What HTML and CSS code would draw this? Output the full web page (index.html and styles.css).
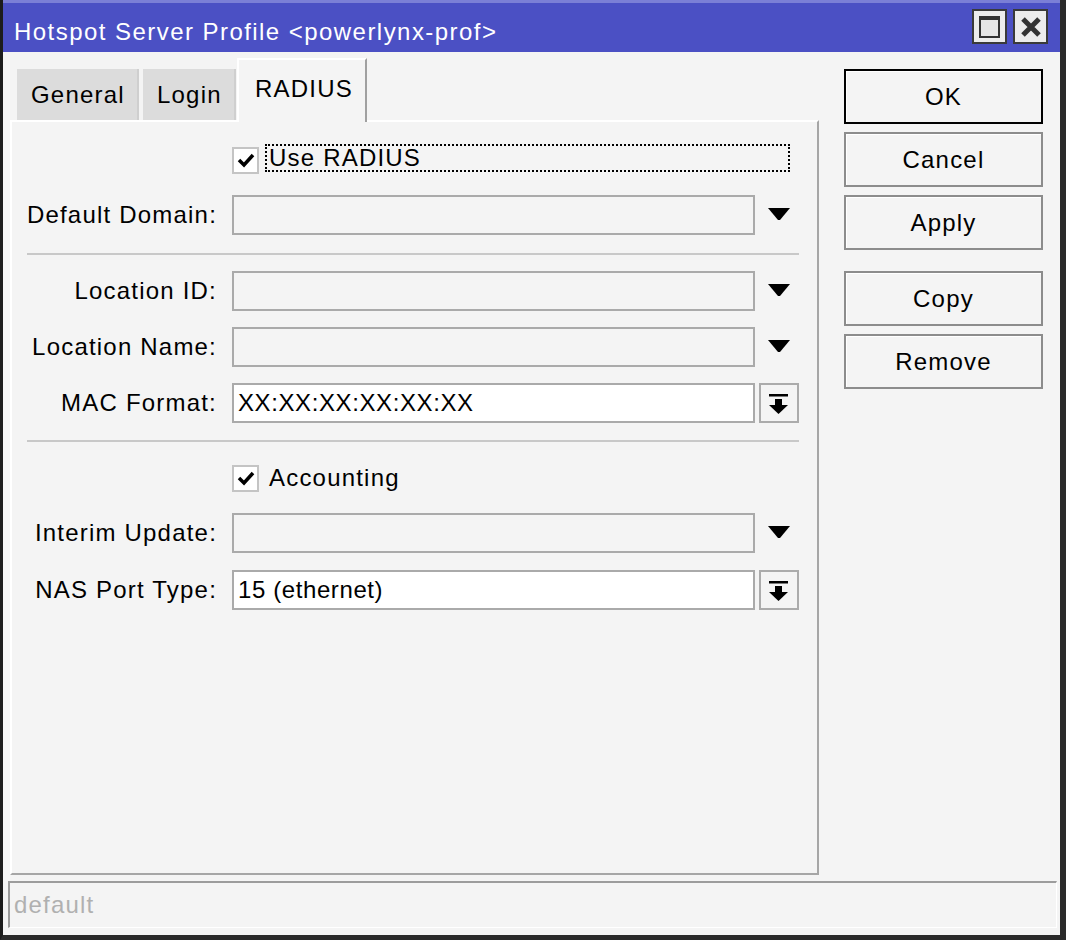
FILE: index.html
```html
<!DOCTYPE html>
<html>
<head>
<meta charset="utf-8">
<link rel="stylesheet" href="styles.css">
</head>
<body>
<div class="window">
  <div class="titlebar">
    <span class="title">Hotspot Server Profile &lt;powerlynx-prof&gt;</span>
    <div class="winbtns">
      <div class="winbtn"><span class="maxicon"></span></div>
      <div class="winbtn">
        <svg width="22" height="22" viewBox="0 0 22 22"><path d="M3 3 L19 19 M19 3 L3 19" stroke="#333" stroke-width="5"/></svg>
      </div>
    </div>
  </div>
  <div class="main">
    <div class="leftcol">
      <div class="tabs">
        <div class="tab t-general">General</div>
        <div class="tab t-login">Login</div>
        <div class="tab active">RADIUS</div>
      </div>
      <div class="panel">
        <div class="row check-row first">
          <span class="spacer"></span>
          <span class="checkbox"><svg width="18" height="16" viewBox="0 0 18 16"><path d="M2 8 L7 13 L16 3" fill="none" stroke="#000" stroke-width="3.5"/></svg></span>
          <span class="check-label focus">Use RADIUS</span>
        </div>
        <div class="row r-dd">
          <label class="lbl">Default Domain:</label>
          <div class="field"></div>
          <div class="arrow"><svg width="22" height="12" viewBox="0 0 22 12"><polygon points="0,0 22,0 12,12 10,12" fill="#000"/></svg></div>
        </div>
        <div class="sep s1"></div>
        <div class="row r-loc">
          <label class="lbl">Location ID:</label>
          <div class="field"></div>
          <div class="arrow"><svg width="22" height="12" viewBox="0 0 22 12"><polygon points="0,0 22,0 12,12 10,12" fill="#000"/></svg></div>
        </div>
        <div class="row r-next">
          <label class="lbl">Location Name:</label>
          <div class="field"></div>
          <div class="arrow"><svg width="22" height="12" viewBox="0 0 22 12"><polygon points="0,0 22,0 12,12 10,12" fill="#000"/></svg></div>
        </div>
        <div class="row r-next">
          <label class="lbl">MAC Format:</label>
          <div class="field white">XX:XX:XX:XX:XX:XX</div>
          <div class="dbtn"><svg width="36" height="36" viewBox="0 0 36 36"><rect x="8" y="9" width="19" height="2.5" fill="#000"/><rect x="14" y="14" width="7" height="7" fill="#000"/><polygon points="8,20 27,20 17.5,29" fill="#000"/></svg></div>
        </div>
        <div class="sep s2"></div>
        <div class="row check-row acc">
          <span class="spacer"></span>
          <span class="checkbox"><svg width="18" height="16" viewBox="0 0 18 16"><path d="M2 8 L7 13 L16 3" fill="none" stroke="#000" stroke-width="3.5"/></svg></span>
          <span class="check-label">Accounting</span>
        </div>
        <div class="row r-int">
          <label class="lbl">Interim Update:</label>
          <div class="field"></div>
          <div class="arrow"><svg width="22" height="12" viewBox="0 0 22 12"><polygon points="0,0 22,0 12,12 10,12" fill="#000"/></svg></div>
        </div>
        <div class="row r-nas">
          <label class="lbl">NAS Port Type:</label>
          <div class="field white">15 (ethernet)</div>
          <div class="dbtn"><svg width="36" height="36" viewBox="0 0 36 36"><rect x="8" y="9" width="19" height="2.5" fill="#000"/><rect x="14" y="14" width="7" height="7" fill="#000"/><polygon points="8,20 27,20 17.5,29" fill="#000"/></svg></div>
        </div>
      </div>
    </div>
    <div class="rightcol">
      <div class="btn ok">OK</div>
      <div class="btn">Cancel</div>
      <div class="btn">Apply</div>
      <div class="btn gap">Copy</div>
      <div class="btn">Remove</div>
    </div>
  </div>
  <div class="statuswrap">
    <div class="status">default</div>
  </div>
</div>
</body>
</html>
```
FILE: styles.css
```css
* { box-sizing: border-box; }
html, body { margin: 0; padding: 0; background: #fff; }
body { font-family: "Liberation Sans", Arial, sans-serif; font-size: 24px; letter-spacing: 1.2px; color: #000; }

.window {
  width: 1066px;
  height: 940px;
  background: #f4f4f4;
  border-left: 3px solid #1c1c1c;
  border-right: 6px solid #2a2a2a;
  border-bottom: 5px solid #2a2a2a;
  display: flex;
  flex-direction: column;
}

.titlebar {
  height: 52px;
  background: #4b50c4;
  border-top: 3px solid #7b7fd6;
  display: flex;
  align-items: center;
  justify-content: space-between;
  padding: 0 12px 0 11px;
  flex: none;
}
.title { color: #fff; font-size: 24px; letter-spacing: 1.45px; margin-top: 8px; }
.winbtns { display: flex; gap: 6px; margin-top: -2px; }
.winbtn {
  width: 35px;
  height: 35px;
  background: #ececec;
  border: 2px solid #3a3a3a;
  display: flex;
  align-items: center;
  justify-content: center;
}
.maxicon {
  width: 21px;
  height: 22px;
  border: 2px solid #333;
  border-top-width: 4px;
  background: #e6e6e6;
}

.main {
  display: flex;
  padding: 6px 0 0 7px;
  flex: none;
}
.leftcol { width: 809px; display: flex; flex-direction: column; }

.tabs {
  height: 62px;
  display: flex;
  align-items: flex-end;
  padding-left: 7px;
  position: relative;
  z-index: 1;
}
.tab {
  height: 51px;
  background: #dcdcdc;
  border-right: 2px solid #cfcfcf;
  display: flex;
  align-items: center;
  padding-left: 14px;
  font-size: 24px;
  flex: none;
}
.t-general { width: 122px; }
.t-login { width: 93px; margin-left: 4px; }
.tab.active {
  width: 130px;
  margin-left: 1px;
  height: 64px;
  margin-bottom: -2px;
  background: #f4f4f4;
  border-top: 2px solid #fff;
  border-left: 2px solid #fff;
  border-right: 2px solid #a0a0a0;
  padding: 0 0 4px 16px;
}

.panel {
  height: 755px;
  border-top: 2px solid #fff;
  border-left: 2px solid #fff;
  border-right: 2px solid #a6a6a6;
  border-bottom: 2px solid #a6a6a6;
  padding-top: 18px;
}

.row { display: flex; align-items: center; height: 40px; }
.lbl { width: 213px; text-align: right; padding-right: 2px; flex: none; white-space: nowrap; }
.spacer { width: 220px; flex: none; }
.field {
  margin-left: 7px;
  width: 523px;
  height: 40px;
  border: 2px solid #aaaaaa;
  background: #f4f4f4;
  padding: 0 0 0 4px;
  display: flex;
  align-items: center;
  flex: none;
  letter-spacing: 0.6px;
}
.lbl { width: 210px; padding-right: 5px; }
.field { margin-left: 10px; }
.field.white { background: #fff; }
.arrow {
  width: 44px;
  display: flex;
  justify-content: center;
  padding-left: 4px;
  margin-top: -2px;
}
.dbtn {
  margin-left: 4px;
  width: 40px;
  height: 40px;
  border: 2px solid #ababab;
  background: #f4f4f4;
  display: flex;
  align-items: center;
  justify-content: center;
}

.checkbox {
  width: 27px;
  height: 27px;
  border: 2px solid #c4c4c4;
  background: #fff;
  display: flex;
  align-items: center;
  justify-content: center;
  flex: none;
}
.check-label { margin-left: 8px; padding-left: 2px; }
.check-label.focus {
  width: 525px;
  height: 28px;
  border: 2px dotted #000;
  line-height: 24px;
  margin-left: 6px;
  margin-top: -4px;
}

.r-dd { margin-top: 15px; }
.sep { margin: 17px 0 0 15px; width: 772px; height: 2px; background: #c8c8c8; }
.s1 { margin-top: 18px; }
.r-loc { margin-top: 16px; }
.r-next { margin-top: 16px; }
.s2 { margin-top: 17px; }
.acc { margin-top: 16px; }
.r-int { margin-top: 15px; }
.r-nas { margin-top: 17px; }

.rightcol {
  margin-left: 25px;
  width: 199px;
  padding-top: 11px;
  display: flex;
  flex-direction: column;
}
.btn {
  height: 55px;
  border: 2px solid #8c8c8c;
  box-shadow: inset 1px 1px 0 #fff;
  background: #f4f4f4;
  display: flex;
  align-items: center;
  justify-content: center;
  margin-bottom: 8px;
}
.btn.ok { border-color: #000; margin-bottom: 8px; }
.btn.gap { margin-top: 13px; }

.statuswrap {
  padding: 6px 0 0 5px;
  flex: none;
}
.status {
  width: 1049px;
  height: 47px;
  border-top: 2px solid #9c9c9c;
  border-left: 2px solid #9c9c9c;
  border-right: 1px solid #fff;
  border-bottom: 1px solid #fff;
  color: #b0b0b0;
  padding-left: 4px;
  display: flex;
  align-items: center;
}
```
